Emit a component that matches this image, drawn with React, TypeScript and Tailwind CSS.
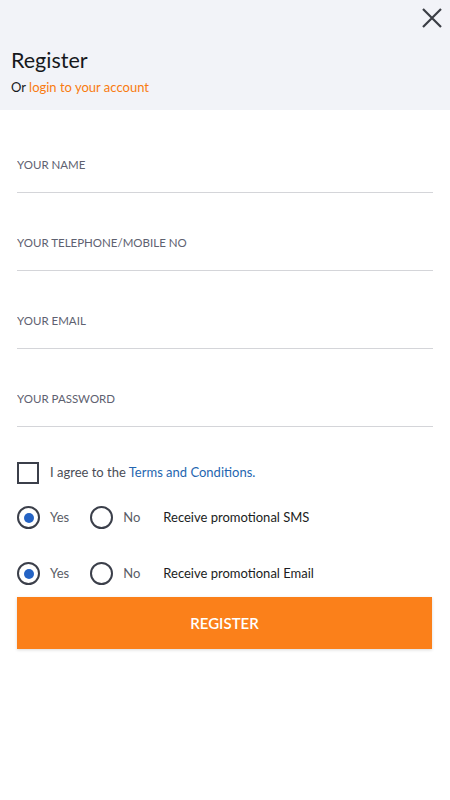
import { useState } from 'react'

function Radio({ checked, label, onClick }: { checked: boolean; label: string; onClick: () => void }) {
  return (
    <button type="button" onClick={onClick} className="flex items-center gap-[10px]">
      <span className="flex h-[23px] w-[23px] items-center justify-center rounded-full border-2 border-[#3b3f4a]">
        {checked && <span className="h-[10px] w-[10px] rounded-full bg-[#2463c4]" />}
      </span>
      <span className="text-[13px] text-[#5a5d66]">{label}</span>
    </button>
  )
}

function PromoRow({ label }: { label: string }) {
  const [yes, setYes] = useState(true)
  return (
    <div className="flex h-[23px] items-center">
      <Radio checked={yes} label="Yes" onClick={() => setYes(true)} />
      <div className="ml-[21px]">
        <Radio checked={!yes} label="No" onClick={() => setYes(false)} />
      </div>
      <span className="ml-[23px] text-[13px] text-[#1b1d22]">{label}</span>
    </div>
  )
}

export default function App() {
  const [agree, setAgree] = useState(false)
  const fields = ['YOUR NAME', 'YOUR TELEPHONE/MOBILE NO', 'YOUR EMAIL', 'YOUR PASSWORD']

  return (
    <div className="min-h-[800px] w-[450px] bg-white font-['Lato','Liberation_Sans',sans-serif]">
      {/* HEADER */}
      <div className="relative h-[110px] bg-[#f2f3f8] px-[11px] pt-[47px]">
        <button className="absolute right-[5px] top-[5px] p-[2px] text-[#3a3d44]" aria-label="close">
          <svg width="22" height="22" viewBox="0 0 22 22" fill="none" stroke="currentColor" strokeWidth="2.2">
            <path d="M2 2 L20 20 M20 2 L2 20" />
          </svg>
        </button>
        <h1 className="text-[21.5px] leading-[26px] text-[#16181c]">Register</h1>
        <p className="mt-[5px] text-[13px] text-[#16181c]">
          Or <a className="text-[#f97b10]">login to your account</a>
        </p>
      </div>

      {/* FORM */}
      <div className="px-[17px] pt-[5px]">
        {fields.map((f) => (
          <div key={f} className="flex h-[78px] items-end border-b border-[#d4d5d9] pb-[19px]">
            <input
              placeholder={f}
              className="h-[16px] w-full bg-transparent text-[11.5px] leading-[16px] uppercase text-[#5e6170] outline-none placeholder:text-[#5e6170]"
            />
          </div>
        ))}

        <div className="mt-[35px] flex items-center gap-[11px]">
          <button
            type="button"
            onClick={() => setAgree(!agree)}
            className="flex h-[22px] w-[22px] items-center justify-center border-2 border-[#3b3f4a]"
          >
            {agree && <span className="h-[10px] w-[10px] bg-[#2463c4]" />}
          </button>
          <span className="text-[13px] text-[#4a4d56]">
            I agree to the <a className="text-[#2566b0]">Terms and Conditions.</a>
          </span>
        </div>

        <div className="mt-[22px]">
          <PromoRow label="Receive promotional SMS" />
        </div>
        <div className="mt-[33px]">
          <PromoRow label="Receive promotional Email" />
        </div>

        <button className="mt-[12px] h-[52px] w-[415px] bg-[#fb801a] text-[15px] font-semibold text-white shadow-[0_1px_3px_rgba(0,0,0,0.15)]">
          REGISTER
        </button>
      </div>
    </div>
  )
}
